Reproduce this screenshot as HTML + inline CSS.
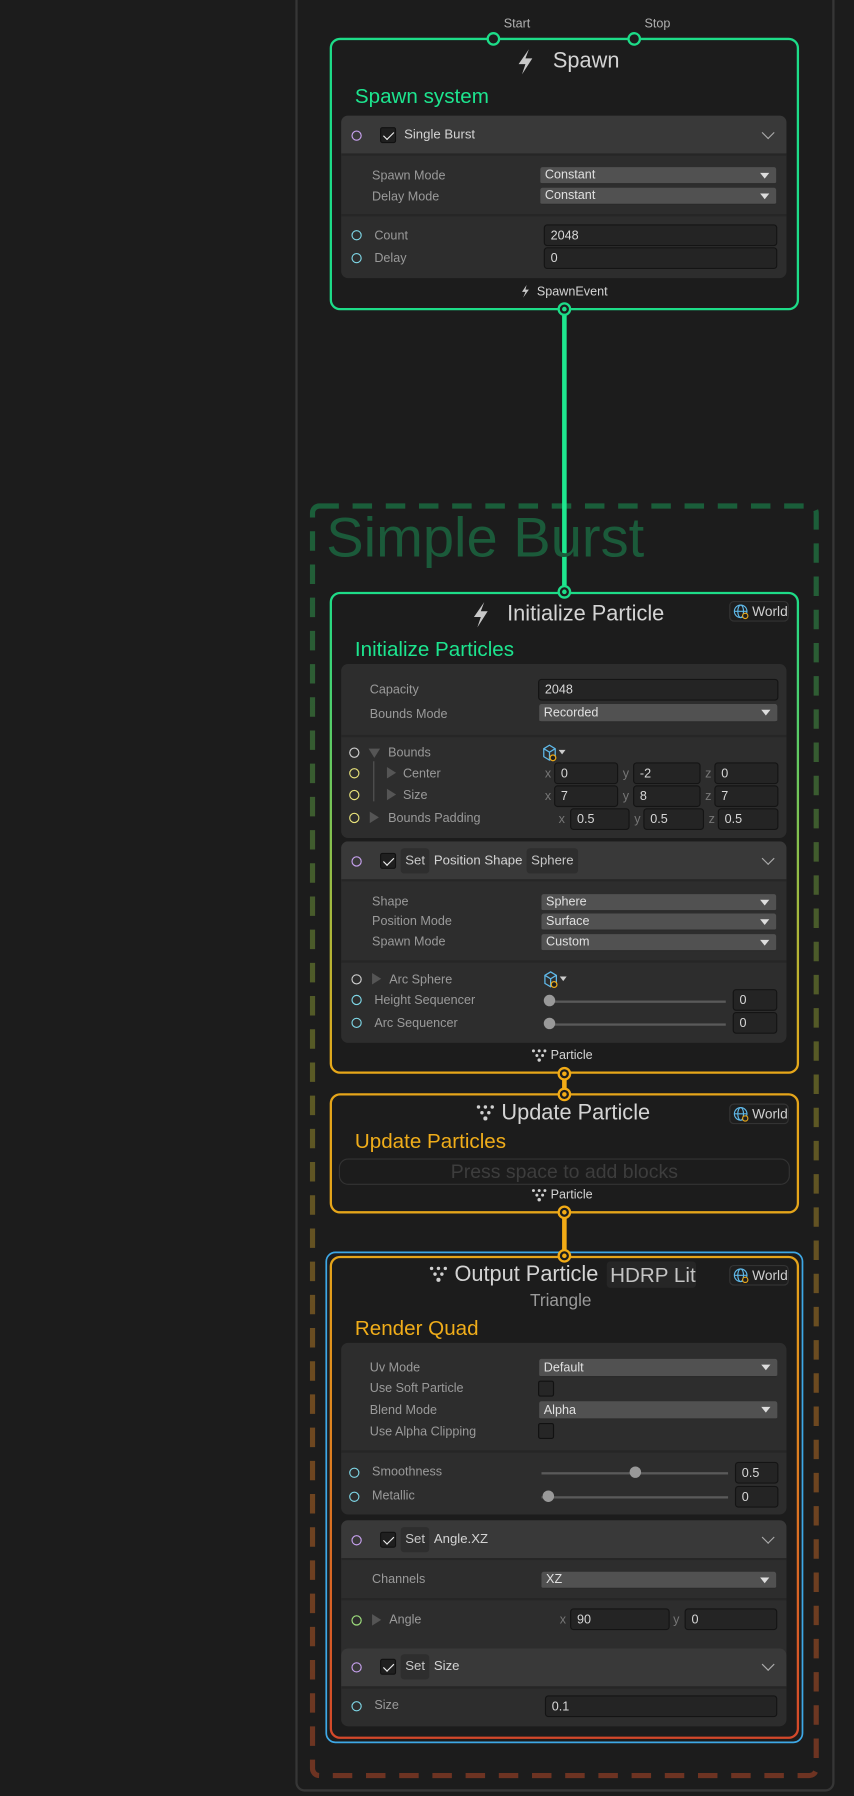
<!DOCTYPE html>
<html><head><meta charset="utf-8"><style>
*{margin:0;padding:0;box-sizing:border-box}
html,body{width:854px;height:1796px;background:#1c1c1c;overflow:hidden;font-family:"Liberation Sans",sans-serif}
#w{position:absolute;left:0;top:0;width:746px;height:1569px;transform:scale(1.14477);transform-origin:0 0}
.a{position:absolute}
.t{position:absolute;line-height:16px;font-size:11px;color:#9a9a9a;white-space:nowrap}
.v{color:#d4d4d4}
.blk{position:absolute;left:298px;width:389px;background:#2d2d2d;border-radius:6px;overflow:hidden}
.hd{position:absolute;left:0;width:100%;height:35px;background:#393939;border-bottom:2px solid #262626}
.sep{position:absolute;left:0;width:100%;height:2px;background:#262626}
.dd{position:absolute;height:15px;background:#515151;border-radius:2px;font-size:11px;line-height:15px;color:#e0e0e0;padding-left:4px;border-bottom:1px solid #2a2a2a}
.dd:after{content:"";position:absolute;right:6px;top:5px;border-left:4px solid transparent;border-right:4px solid transparent;border-top:5px solid #ddd}
.f{position:absolute;height:19px;background:#242424;border:1px solid #141414;border-radius:3px;font-size:11px;line-height:18px;color:#d8d8d8;padding-left:5px}
.p{position:absolute;width:9px;height:9px;border-radius:50%;border:1.6px solid #ccc}
.pu{border-color:#c8a2f0}.cy{border-color:#7ed6e6}.ye{border-color:#e8e27a}.wh{border-color:#cfcfcf}.gr{border-color:#9fe07e}
.cb{position:absolute;width:14px;height:14px;background:#1f1f1f;border-radius:2px;border:1px solid #111}
.ck:after{content:"";position:absolute;left:4px;top:1px;width:4px;height:8px;border:solid #eee;border-width:0 1.6px 1.6px 0;transform:rotate(45deg)}
.pill{position:absolute;background:#2e2e2e;border-radius:3px;font-size:11.5px;line-height:22px;color:#c8c8c8;padding:0 4px}
.chev{position:absolute;width:8px;height:8px;border:solid #aaa;border-width:0 1.6px 1.6px 0;transform:rotate(45deg)}
.tri{position:absolute;border-top:5px solid transparent;border-bottom:5px solid transparent;border-left:8px solid #555}
.trid{position:absolute;border-left:5px solid transparent;border-right:5px solid transparent;border-top:8px solid #555}
.sl{position:absolute;height:2px;background:#5a5a5a}
.kn{position:absolute;width:10px;height:10px;border-radius:50%;background:#999}
.world{position:absolute;left:637px;width:52px;height:18px;border:1px solid #333;border-radius:4px;background:#1e1e1e;font-size:12px;color:#d0d0d0;line-height:17px;padding-left:19px}
.ttl{position:absolute;font-size:19px;color:#d4d4d4;line-height:24px;white-space:nowrap}
.sub{position:absolute;font-size:18px;line-height:24px;white-space:nowrap}
.xyz{position:absolute;font-size:11px;color:#777;line-height:16px}
</style></head><body><div id="w">

<div class="a" style="left:258px;top:-10px;width:471px;height:1575px;border:2px solid #363636;border-radius:8px;background:#1c1c1c"></div>

<svg class="a" style="left:0;top:0" width="746" height="1569">
<defs>
<linearGradient id="gg" x1="0" y1="440" x2="0" y2="1553" gradientUnits="userSpaceOnUse"><stop offset="0" stop-color="#1a5e3a"/><stop offset="0.45" stop-color="#5a5a25"/><stop offset="0.7" stop-color="#6e4a20"/><stop offset="1" stop-color="#6d3322"/></linearGradient>
<linearGradient id="gi" x1="0" y1="517" x2="0" y2="937" gradientUnits="userSpaceOnUse"><stop offset="0" stop-color="#1ddc88"/><stop offset="1" stop-color="#e7a719"/></linearGradient>
<linearGradient id="go" x1="0" y1="1097" x2="0" y2="1518" gradientUnits="userSpaceOnUse"><stop offset="0" stop-color="#e5a51a"/><stop offset="1" stop-color="#d4482a"/></linearGradient>
</defs>
<rect x="273" y="442" width="440" height="1109" rx="6" fill="none" stroke="url(#gg)" stroke-width="4.5" stroke-dasharray="17 12"/>
<rect x="289" y="34" width="408" height="236" rx="8" fill="none" stroke="#1ddc88" stroke-width="2"/>
<line x1="493" y1="270" x2="493" y2="517" stroke="#1ee68e" stroke-width="4"/>
<rect x="289" y="518" width="408" height="419" rx="8" fill="none" stroke="url(#gi)" stroke-width="2"/>
<line x1="493" y1="938" x2="493" y2="956" stroke="#f2ab16" stroke-width="4"/>
<rect x="289" y="956" width="408" height="103" rx="8" fill="none" stroke="#e5a51a" stroke-width="2"/>
<line x1="493" y1="1059" x2="493" y2="1097" stroke="#f2ab16" stroke-width="4"/>
<rect x="285" y="1094" width="416" height="428" rx="8" fill="none" stroke="#3ea8e6" stroke-width="1.5"/>
<rect x="289" y="1098" width="408" height="420" rx="8" fill="none" stroke="url(#go)" stroke-width="2"/>
<g fill="#1c1c1c" stroke-width="2"><circle cx="431" cy="34" r="5" stroke="#1ddc88"/><circle cx="554" cy="34" r="5" stroke="#1ddc88"/>
<circle cx="493" cy="270" r="5" stroke="#1ddc88"/><circle cx="493" cy="517" r="5" stroke="#1ddc88"/>
<circle cx="493" cy="938" r="5" stroke="#f2ab16"/><circle cx="493" cy="956" r="5" stroke="#f2ab16"/>
<circle cx="493" cy="1059" r="5" stroke="#f2ab16"/><circle cx="493" cy="1097" r="5" stroke="#f2ab16"/></g>
<g><circle cx="493" cy="270" r="2" fill="#1ddc88"/><circle cx="493" cy="517" r="2" fill="#1ddc88"/><circle cx="493" cy="938" r="2" fill="#f2ab16"/><circle cx="493" cy="956" r="2" fill="#f2ab16"/><circle cx="493" cy="1059" r="2" fill="#f2ab16"/><circle cx="493" cy="1097" r="2" fill="#f2ab16"/></g>
<path d="M462 43 L453 56 L459 56 L456 65 L465 51 L459 51 Z" fill="#c8c8c8"/>
<path d="M423 526 L414 539 L420 539 L417 548 L426 534 L420 534 Z" fill="#c8c8c8"/>
<path d="M460 249 L456 255 L459 255 L457 260 L462 253 L459 253 Z" fill="#c8c8c8"/>
<g fill="#d0d0d0"><circle cx="466" cy="918" r="1.3"/><circle cx="471" cy="918" r="1.3"/><circle cx="476" cy="918" r="1.3"/><circle cx="469" cy="922" r="1.3"/><circle cx="474" cy="922" r="1.3"/><circle cx="471" cy="926" r="1.5"/>
<circle cx="466" cy="1040" r="1.3"/><circle cx="471" cy="1040" r="1.3"/><circle cx="476" cy="1040" r="1.3"/><circle cx="469" cy="1044" r="1.3"/><circle cx="474" cy="1044" r="1.3"/><circle cx="471" cy="1048" r="1.5"/>
<circle cx="418" cy="967" r="1.5"/><circle cx="424" cy="967" r="1.5"/><circle cx="430" cy="967" r="1.5"/><circle cx="421" cy="972" r="1.5"/><circle cx="427" cy="972" r="1.5"/><circle cx="424" cy="977" r="1.8"/>
<circle cx="377" cy="1108" r="1.5"/><circle cx="383" cy="1108" r="1.5"/><circle cx="389" cy="1108" r="1.5"/><circle cx="380" cy="1113" r="1.5"/><circle cx="386" cy="1113" r="1.5"/><circle cx="383" cy="1118" r="1.8"/></g>
</svg>

<div class="a" style="left:285px;top:442px;font-size:49px;line-height:56px;color:#1b5a3a">Simple Burst</div>

<!-- SPAWN -->
<div class="t" style="left:440px;top:13px;color:#b0b0b0">Start</div>
<div class="t" style="left:563px;top:13px;color:#b0b0b0">Stop</div>
<div class="ttl" style="left:483px;top:42px">Spawn</div>
<div class="sub" style="left:310px;top:72px;color:#1de58f">Spawn system</div>
<div class="blk" style="top:101px;height:142px">
 <div class="hd" style="top:0"></div>
 <div class="sep" style="top:86px"></div>
</div>
<div class="p pu" style="left:307px;top:114px"></div>
<div class="cb ck" style="left:332px;top:111px"></div>
<div class="t v" style="left:353px;top:110px;font-size:11.5px">Single Burst</div>
<div class="chev" style="left:667px;top:112px"></div>
<div class="t" style="left:325px;top:146px">Spawn Mode</div>
<div class="dd" style="left:472px;top:146px;width:206px">Constant</div>
<div class="t" style="left:325px;top:164px">Delay Mode</div>
<div class="dd" style="left:472px;top:164px;width:206px">Constant</div>
<div class="p cy" style="left:307px;top:201px"></div>
<div class="t" style="left:327px;top:198px">Count</div>
<div class="f" style="left:475px;top:196px;width:204px">2048</div>
<div class="p cy" style="left:307px;top:221px"></div>
<div class="t" style="left:327px;top:218px">Delay</div>
<div class="f" style="left:475px;top:216px;width:204px">0</div>
<div class="t v" style="left:469px;top:247px">SpawnEvent</div>

<!-- INIT -->
<div class="ttl" style="left:443px;top:525px">Initialize Particle</div>
<div class="world" style="top:525px">World</div>
<div class="sub" style="left:310px;top:555px;color:#1de58f">Initialize Particles</div>
<div class="blk" style="top:580px;height:152px">
 <div class="sep" style="top:62px"></div>
</div>
<div class="t" style="left:323px;top:595px">Capacity</div>
<div class="f" style="left:470px;top:593px;width:210px">2048</div>
<div class="t" style="left:323px;top:616px">Bounds Mode</div>
<div class="dd" style="left:471px;top:615px;width:208px;height:16px;line-height:16px">Recorded</div>
<div class="p wh" style="left:305px;top:653px"></div>
<div class="trid" style="left:322px;top:654px"></div>
<div class="t" style="left:339px;top:650px">Bounds</div>
<div class="a" style="left:326px;top:665px;width:1px;height:35px;background:#555"></div>
<div class="p ye" style="left:305px;top:671px"></div>
<div class="tri" style="left:338px;top:670px"></div>
<div class="t" style="left:352px;top:668px">Center</div>
<div class="p ye" style="left:305px;top:690px"></div>
<div class="tri" style="left:338px;top:689px"></div>
<div class="t" style="left:352px;top:687px">Size</div>
<div class="p ye" style="left:305px;top:710px"></div>
<div class="tri" style="left:323px;top:709px"></div>
<div class="t" style="left:339px;top:707px">Bounds Padding</div>
<svg class="a" style="left:473px;top:650px" width="24" height="16"><path d="M2 4 L7 1 L12 4 L12 11 L7 14 L2 11 Z M2 4 L7 7 L12 4 M7 7 L7 14" fill="none" stroke="#5fb8e8" stroke-width="1.1"/><circle cx="10" cy="12" r="2.5" fill="#1c1c1c" stroke="#e9a81a" stroke-width="1.1"/><path d="M15 5 L21 5 L18 9 Z" fill="#ccc"/></svg>
<div class="xyz" style="left:476px;top:668px">x</div><div class="f" style="left:484px;top:666px;width:56px">0</div>
<div class="xyz" style="left:544px;top:668px">y</div><div class="f" style="left:553px;top:666px;width:59px">-2</div>
<div class="xyz" style="left:616px;top:668px">z</div><div class="f" style="left:624px;top:666px;width:56px">0</div>
<div class="xyz" style="left:476px;top:688px">x</div><div class="f" style="left:484px;top:686px;width:56px">7</div>
<div class="xyz" style="left:544px;top:688px">y</div><div class="f" style="left:553px;top:686px;width:59px">8</div>
<div class="xyz" style="left:616px;top:688px">z</div><div class="f" style="left:624px;top:686px;width:56px">7</div>
<div class="xyz" style="left:488px;top:708px">x</div><div class="f" style="left:498px;top:706px;width:52px">0.5</div>
<div class="xyz" style="left:554px;top:708px">y</div><div class="f" style="left:562px;top:706px;width:53px">0.5</div>
<div class="xyz" style="left:619px;top:708px">z</div><div class="f" style="left:627px;top:706px;width:53px">0.5</div>

<div class="blk" style="top:735px;height:176px">
 <div class="hd" style="top:0"></div>
 <div class="sep" style="top:104px"></div>
</div>
<div class="p pu" style="left:307px;top:748px"></div>
<div class="cb ck" style="left:332px;top:745px"></div>
<div class="pill" style="left:350px;top:741px">Set</div>
<div class="t v" style="left:379px;top:744px;font-size:11.5px">Position Shape</div>
<div class="pill" style="left:460px;top:741px">Sphere</div>
<div class="chev" style="left:667px;top:746px"></div>
<div class="t" style="left:325px;top:780px">Shape</div>
<div class="dd" style="left:473px;top:781px;width:205px">Sphere</div>
<div class="t" style="left:325px;top:797px">Position Mode</div>
<div class="dd" style="left:473px;top:798px;width:205px">Surface</div>
<div class="t" style="left:325px;top:815px">Spawn Mode</div>
<div class="dd" style="left:473px;top:816px;width:205px">Custom</div>
<div class="p wh" style="left:307px;top:851px"></div>
<div class="tri" style="left:325px;top:850px"></div>
<div class="t" style="left:340px;top:848px">Arc Sphere</div>
<svg class="a" style="left:474px;top:848px" width="24" height="16"><path d="M2 4 L7 1 L12 4 L12 11 L7 14 L2 11 Z M2 4 L7 7 L12 4 M7 7 L7 14" fill="none" stroke="#5fb8e8" stroke-width="1.1"/><circle cx="10" cy="12" r="2.5" fill="#1c1c1c" stroke="#e9a81a" stroke-width="1.1"/><path d="M15 5 L21 5 L18 9 Z" fill="#ccc"/></svg>
<div class="p cy" style="left:307px;top:869px"></div>
<div class="t" style="left:327px;top:866px">Height Sequencer</div>
<div class="sl" style="left:480px;top:874px;width:154px"></div><div class="kn" style="left:475px;top:869px"></div>
<div class="f" style="left:640px;top:864px;width:39px">0</div>
<div class="p cy" style="left:307px;top:889px"></div>
<div class="t" style="left:327px;top:886px">Arc Sequencer</div>
<div class="sl" style="left:480px;top:894px;width:154px"></div><div class="kn" style="left:475px;top:889px"></div>
<div class="f" style="left:640px;top:884px;width:39px">0</div>
<div class="t v" style="left:481px;top:914px">Particle</div>

<!-- UPDATE -->
<div class="ttl" style="left:438px;top:961px">Update Particle</div>
<div class="world" style="top:964px">World</div>
<div class="sub" style="left:310px;top:985px;color:#f0ad1a">Update Particles</div>
<div class="a" style="left:296px;top:1012px;width:394px;height:23px;border:1.5px solid #333;border-radius:8px;text-align:center;font-size:17px;line-height:21px;color:#3d3d3d">Press space to add blocks</div>
<div class="t v" style="left:481px;top:1036px">Particle</div>

<!-- OUTPUT -->
<div class="ttl" style="left:397px;top:1102px">Output Particle</div>
<div class="a" style="left:530px;top:1102px;width:78px;height:23px;background:#262626;border-radius:3px;font-size:18px;line-height:24px;color:#c4c4c4;padding-left:3px">HDRP Lit</div>
<div class="a" style="left:463px;top:1126px;font-size:15px;color:#9a9a9a;line-height:22px">Triangle</div>
<div class="world" style="top:1105px">World</div>
<div class="sub" style="left:310px;top:1148px;color:#f0ad1a">Render Quad</div>
<div class="blk" style="top:1173px;height:150px">
 <div class="sep" style="top:94px"></div>
</div>
<div class="t" style="left:323px;top:1187px">Uv Mode</div>
<div class="dd" style="left:471px;top:1187px;width:208px;height:16px;line-height:16px">Default</div>
<div class="t" style="left:323px;top:1205px">Use Soft Particle</div>
<div class="cb" style="left:470px;top:1206px;background:#262626"></div>
<div class="t" style="left:323px;top:1224px">Blend Mode</div>
<div class="dd" style="left:471px;top:1224px;width:208px;height:16px;line-height:16px">Alpha</div>
<div class="t" style="left:323px;top:1243px">Use Alpha Clipping</div>
<div class="cb" style="left:470px;top:1243px;background:#262626"></div>
<div class="p cy" style="left:305px;top:1282px"></div>
<div class="t" style="left:325px;top:1278px">Smoothness</div>
<div class="sl" style="left:473px;top:1286px;width:163px"></div><div class="kn" style="left:550px;top:1281px"></div>
<div class="f" style="left:642px;top:1277px;width:38px">0.5</div>
<div class="p cy" style="left:305px;top:1303px"></div>
<div class="t" style="left:325px;top:1299px">Metallic</div>
<div class="sl" style="left:473px;top:1307px;width:163px"></div><div class="kn" style="left:474px;top:1302px"></div>
<div class="f" style="left:642px;top:1298px;width:38px">0</div>

<div class="blk" style="top:1328px;height:137px">
 <div class="hd" style="top:0"></div>
 <div class="sep" style="top:68px"></div>
</div>
<div class="p pu" style="left:307px;top:1341px"></div>
<div class="cb ck" style="left:332px;top:1338px"></div>
<div class="pill" style="left:350px;top:1334px">Set</div>
<div class="t v" style="left:379px;top:1337px;font-size:11.5px">Angle.XZ</div>
<div class="chev" style="left:667px;top:1339px"></div>
<div class="t" style="left:325px;top:1372px">Channels</div>
<div class="dd" style="left:473px;top:1373px;width:205px">XZ</div>
<div class="p gr" style="left:307px;top:1411px"></div>
<div class="tri" style="left:325px;top:1410px"></div>
<div class="t" style="left:340px;top:1407px">Angle</div>
<div class="xyz" style="left:489px;top:1407px">x</div><div class="f" style="left:498px;top:1405px;width:87px">90</div>
<div class="xyz" style="left:588px;top:1407px">y</div><div class="f" style="left:598px;top:1405px;width:81px">0</div>

<div class="blk" style="top:1440px;height:68px">
 <div class="hd" style="top:0"></div>
</div>
<div class="p pu" style="left:307px;top:1452px"></div>
<div class="cb ck" style="left:332px;top:1449px"></div>
<div class="pill" style="left:350px;top:1445px">Set</div>
<div class="t v" style="left:379px;top:1448px;font-size:11.5px">Size</div>
<div class="chev" style="left:667px;top:1450px"></div>
<div class="p cy" style="left:307px;top:1486px"></div>
<div class="t" style="left:327px;top:1482px">Size</div>
<div class="f" style="left:476px;top:1481px;width:203px">0.1</div>

<svg class="a" style="left:640px;top:527px" width="16" height="16"><circle cx="7" cy="7" r="5.5" fill="none" stroke="#5fb8e8" stroke-width="1"/><ellipse cx="7" cy="7" rx="2.5" ry="5.5" fill="none" stroke="#5fb8e8" stroke-width="1"/><line x1="1.5" y1="7" x2="12.5" y2="7" stroke="#5fb8e8"/><circle cx="11" cy="11" r="2.3" fill="#1e1e1e" stroke="#e9a81a" stroke-width="1"/></svg>
<svg class="a" style="left:640px;top:966px" width="16" height="16"><circle cx="7" cy="7" r="5.5" fill="none" stroke="#5fb8e8" stroke-width="1"/><ellipse cx="7" cy="7" rx="2.5" ry="5.5" fill="none" stroke="#5fb8e8" stroke-width="1"/><line x1="1.5" y1="7" x2="12.5" y2="7" stroke="#5fb8e8"/><circle cx="11" cy="11" r="2.3" fill="#1e1e1e" stroke="#e9a81a" stroke-width="1"/></svg>
<svg class="a" style="left:640px;top:1107px" width="16" height="16"><circle cx="7" cy="7" r="5.5" fill="none" stroke="#5fb8e8" stroke-width="1"/><ellipse cx="7" cy="7" rx="2.5" ry="5.5" fill="none" stroke="#5fb8e8" stroke-width="1"/><line x1="1.5" y1="7" x2="12.5" y2="7" stroke="#5fb8e8"/><circle cx="11" cy="11" r="2.3" fill="#1e1e1e" stroke="#e9a81a" stroke-width="1"/></svg>

</div></body></html>
